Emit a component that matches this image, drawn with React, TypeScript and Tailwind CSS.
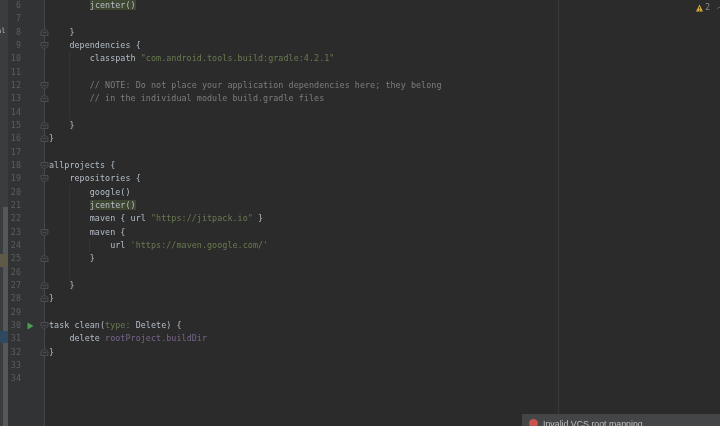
import React from 'react';

const STR = 'text-[#6a7a50]';
const COM = 'text-[#7c7e7f]';

const lines: { n: number; code: React.ReactNode; fold?: 'up' | 'down' }[] = [
  { n: 6, code: <><span>{'        '}</span><span className="bg-[#3e4530]">jcenter()</span></> },
  { n: 7, code: '' },
  { n: 8, code: '    }', fold: 'up' },
  { n: 9, code: '    dependencies {', fold: 'down' },
  { n: 10, code: <>{'        classpath '}<span className={STR}>"com.android.tools.build:gradle:4.2.1"</span></> },
  { n: 11, code: '' },
  { n: 12, code: <span className={COM}>{'        // NOTE: Do not place your application dependencies here; they belong'}</span>, fold: 'down' },
  { n: 13, code: <span className={COM}>{'        // in the individual module build.gradle files'}</span>, fold: 'up' },
  { n: 14, code: '' },
  { n: 15, code: '    }', fold: 'up' },
  { n: 16, code: '}', fold: 'up' },
  { n: 17, code: '' },
  { n: 18, code: 'allprojects {', fold: 'down' },
  { n: 19, code: '    repositories {', fold: 'down' },
  { n: 20, code: '        google()' },
  { n: 21, code: <><span>{'        '}</span><span className="bg-[#3e4530]">jcenter()</span></> },
  { n: 22, code: <>{'        maven { url '}<span className={STR}>"https://jitpack.io"</span>{' }'}</> },
  { n: 23, code: '        maven {', fold: 'down' },
  { n: 24, code: <>{'            url '}<span className={STR}>'https://maven.google.com/'</span></> },
  { n: 25, code: '        }', fold: 'up' },
  { n: 26, code: '' },
  { n: 27, code: '    }', fold: 'up' },
  { n: 28, code: '}', fold: 'up' },
  { n: 29, code: '' },
  { n: 30, code: <>task clean(<span className={STR}>type:</span> Delete) {'{'}</>, fold: 'down' },
  { n: 31, code: <>{'    delete '}<span className="text-[#77658a]">rootProject.buildDir</span></> },
  { n: 32, code: '}', fold: 'up' },
  { n: 33, code: '' },
  { n: 34, code: '' },
];

function FoldMark({ dir }: { dir: 'up' | 'down' }) {
  const d = dir === 'up' ? 'M1 7.5V3.5L4.5 1L8 3.5V7.5Z' : 'M1 1.5V5.5L4.5 8L8 5.5V1.5Z';
  return (
    <svg width="9" height="9" viewBox="0 0 9 9" className="absolute right-[-5px] top-[2px]">
      <path d={d} fill="#313335" stroke="#505355" strokeWidth="0.8" />
      <path d="M2.8 4.5H6.2" stroke="#505355" strokeWidth="0.8" />
    </svg>
  );
}

export default function App() {
  return (
    <div
      className="relative flex h-[426px] w-[720px] overflow-hidden bg-[#2b2b2b] text-[8.4px] tracking-[0.055px] text-[#b4bec8] blur-[0.35px]"
      style={{ fontFamily: "'DejaVu Sans Mono', monospace" }}
    >
      {/* tool window strip + scrollbar */}
      <div className="flex h-full w-[8px] shrink-0 flex-col overflow-hidden bg-[#3a3d3f]">
        <div className="-ml-[3px] h-[207px] shrink-0 pt-[26px] text-[7px] leading-[10px] text-[#b5b8ba]">al</div>
        <div className="flex flex-1 flex-col">
          <div className="ml-[3px] h-[47px] bg-[#55585a]" />
          <div className="h-[13px] bg-[#5f5a48]" />
          <div className="ml-[3px] h-[64px] bg-[#55585a]" />
          <div className="h-[12px] bg-[#2f4a60]" />
          <div className="ml-[3px] flex-1 bg-[#55585a]" />
        </div>
      </div>

      <div className="-mt-[1px] flex min-w-0 flex-1 flex-col">
        <div className="flex h-full">
          <div className="flex w-[37px] shrink-0 flex-col border-r border-[#45484a] bg-[#313335]">
            {lines.map((l) => (
              <div key={l.n} className="relative h-[13.34px] shrink-0 leading-[13.34px] text-[#5b5e60]">
                <span className="absolute right-[23px] top-0">{l.n}</span>
                {l.n === 30 && (
                  <svg width="7" height="8" viewBox="0 0 7 8" className="absolute left-[19px] top-[3px]">
                    <path d="M0.5 0.5L6.5 4L0.5 7.5Z" fill="#4f9e4f" />
                  </svg>
                )}
                {l.fold && <FoldMark dir={l.fold} />}
              </div>
            ))}
          </div>
          <div className="relative w-[514px] shrink-0 border-r border-[#373839] pl-[4px]">
            {lines.map((l) => (
              <div key={l.n} className="h-[13.34px] whitespace-pre leading-[13.34px]">
                {l.code}
              </div>
            ))}
            {/* indent guides */}
            <div className="absolute left-[24px] top-[53px] h-[67px] w-px bg-[#333435]" />
            <div className="absolute left-[24px] top-[187px] h-[93px] w-px bg-[#333435]" />
            <div className="absolute left-[44px] top-[240px] h-[13px] w-px bg-[#333435]" />
          </div>
        </div>
      </div>

      {/* inspection widget */}
      <div className="absolute right-[-2px] top-[3px] flex items-center gap-[2px] text-[8px] leading-[10px] text-[#8a8d8f]">
        <svg width="7" height="8" viewBox="0 0 7 8">
          <path d="M3.5 0.5L7 7.5H0Z" fill="#d2aa3e" />
          <path d="M3.5 3V5.2M3.5 6V6.8" stroke="#3a3320" strokeWidth="0.9" />
        </svg>
        <span>2</span>
        <svg width="6" height="6" viewBox="0 0 6 6" className="ml-[4px]">
          <path d="M1 4L3 2L5 4" fill="none" stroke="#6a6d6f" strokeWidth="0.8" />
        </svg>
      </div>

      {/* balloon notification */}
      <div
        className="absolute bottom-0 right-0 flex h-[12px] w-[198px] items-start gap-[5px] overflow-hidden bg-[#434547] pl-[7px] pt-[5px] text-[8.8px] leading-[11px] tracking-normal text-[#bdc0c2]"
        style={{ fontFamily: "'Liberation Sans', sans-serif" }}
      >
        <span className="h-[9px] w-[9px] shrink-0 rounded-full bg-[#c9524c]" />
        <span className="whitespace-nowrap">Invalid VCS root mapping</span>
      </div>
    </div>
  );
}
